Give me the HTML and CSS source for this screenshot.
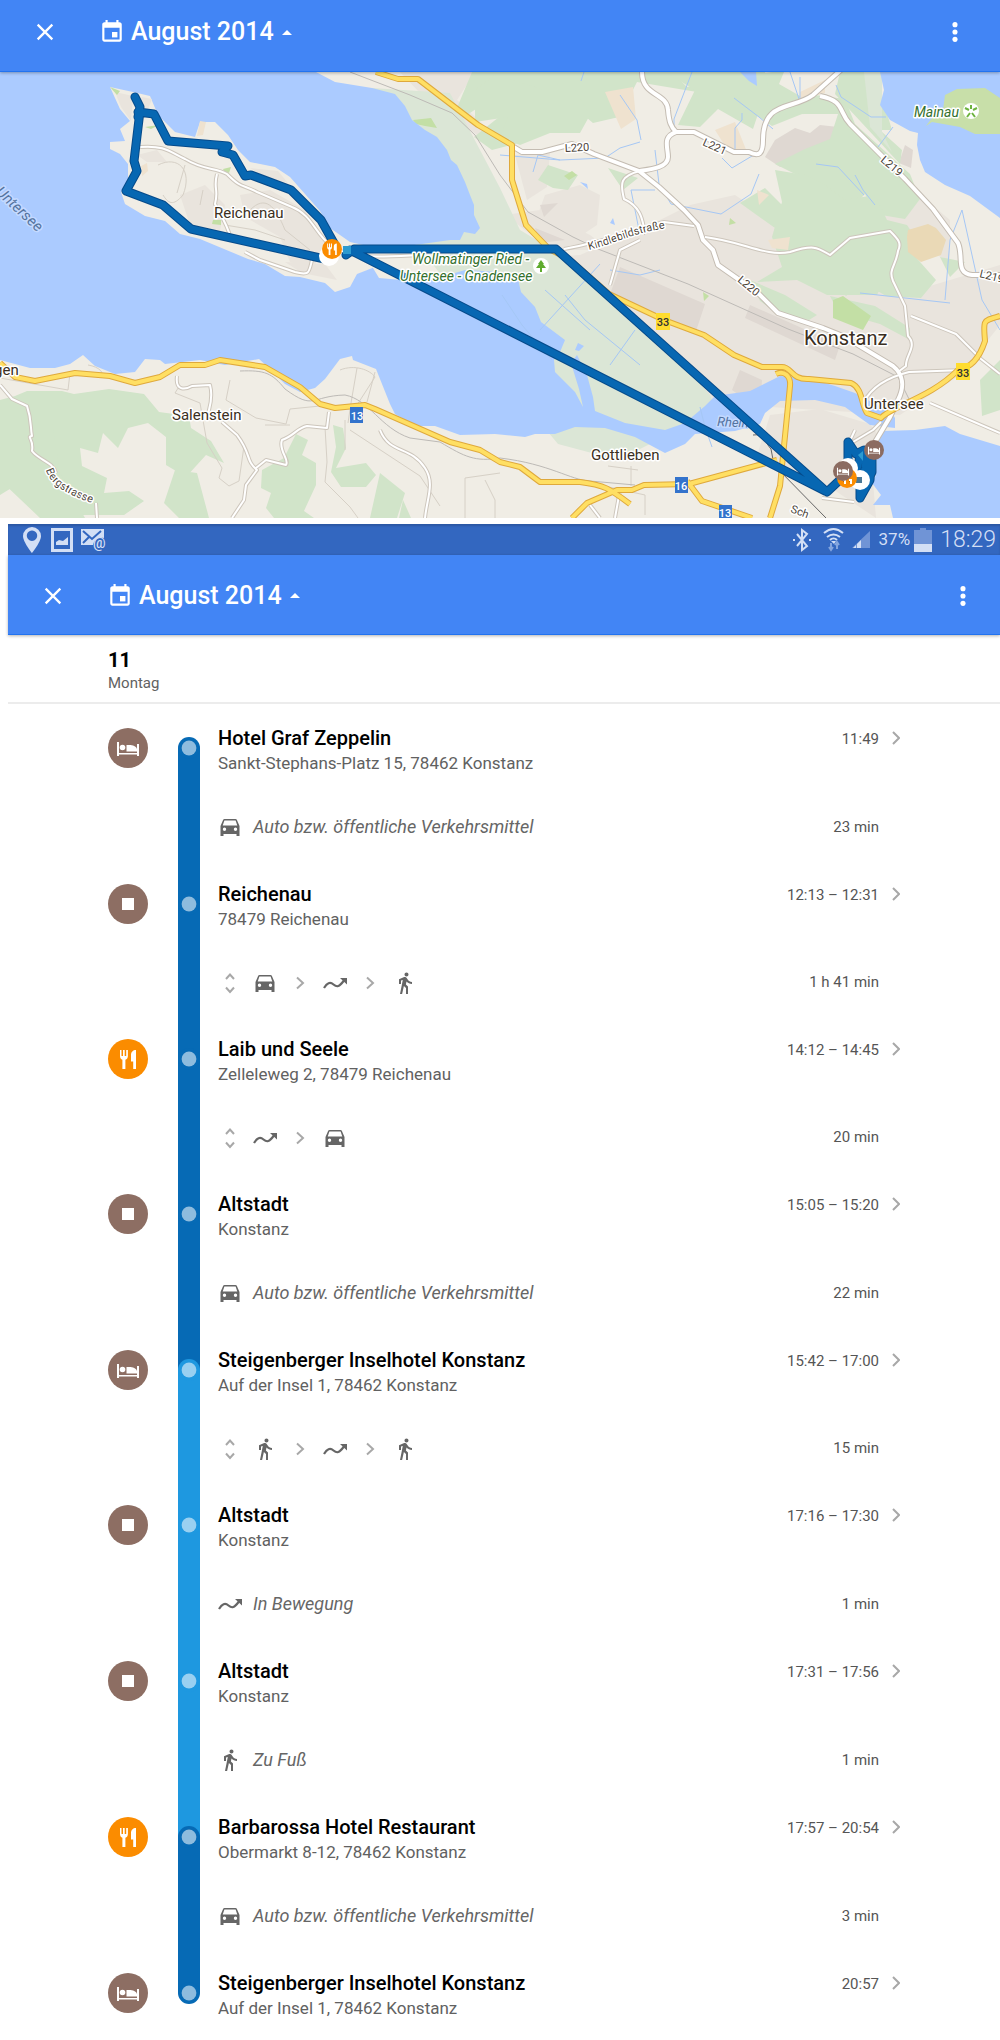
FILE: index.html
```html
<!DOCTYPE html>
<html lang="de">
  <head>
    <meta charset="UTF-8" />
    <meta name="viewport" content="width=device-width, initial-scale=1.0" />
    <title>Zeitachse - August 2014</title>
    <link rel="stylesheet" href="styles.css">
  </head>
  <body>
    <!-- icons used by both screens -->
    <svg class="sprite" width="0" height="0" aria-hidden="true">
      <symbol id="close" viewBox="0 0 24 24">
        <path d="M4 4l16 16M20 4L4 20" fill="none" stroke="currentColor" stroke-width="2.5" />
      </symbol>
      <symbol id="calendar" viewBox="0 0 24 24">
        <path d="M19 3h-1V1h-2v2H8V1H6v2H5c-1.1 0-2 .9-2 2v14c0 1.1.9 2 2 2h14c1.1 0 2-.9 2-2V5c0-1.1-.9-2-2-2zm0 16H5V8h14v11z" />
        <path d="M12 12h5v5h-5z" />
      </symbol>
      <symbol id="more" viewBox="0 0 24 24">
        <circle cx="12" cy="4" r="2.8" />
        <circle cx="12" cy="12" r="2.8" />
        <circle cx="12" cy="20" r="2.8" />
      </symbol>
      <symbol id="bed" viewBox="0 0 40 40">
        <path d="M9 14h2v11h18v-3h2v6h-2v-1.500H11V28H9z" />
        <circle cx="14.500" cy="19.500" r="2.800" />
        <path d="M18.500 17h4c4 .5 6 2 6.500 4V16h2v7.500H18.500z" />
      </symbol>
      <symbol id="square" viewBox="0 0 40 40">
        <path d="M14 14h12v12H14z" />
      </symbol>
      <symbol id="food" viewBox="0 0 40 40">
        <path d="M12 11h1.500v6H15v-6h1.700v6h1.500v-6h1.700v6c0 2-1 3.300-2.500 3.700V30h-3v-9.300C12.900 20.300 12 19 12 17z" />
        <path d="M28 11v19h-2.800v-7.500H23V16c0-3 2-5 5-5z" />
      </symbol>
      <symbol id="car" viewBox="0 0 24 24">
        <path d="M18.920 5.010C18.720 4.420 18.160 4 17.500 4h-11c-.66 0-1.210.42-1.420 1.010L2.500 11v10H5.500v-2h13v2h3V11zM6.500 16a1.700 1.700 0 1 1 0-3.400 1.700 1.700 0 0 1 0 3.400zm11 0a1.700 1.700 0 1 1 0-3.400 1.700 1.700 0 0 1 0 3.400zM4.700 10.500L6.400 5.600h11.200l1.700 4.900z" />
      </symbol>
      <symbol id="walk" viewBox="0 0 24 24">
        <path d="M13.500 5.500c1.100 0 2-.9 2-2s-.9-2-2-2-2 .9-2 2 .9 2 2 2zM9.800 8.900L7 23h2.100l1.800-8 2.100 2v6h2v-7.500l-2.100-2 .6-3C14.800 12 16.800 13 19 13v-2c-1.900 0-3.500-1-4.300-2.400l-1-1.600c-.4-.6-1-1-1.700-1-.3 0-.5.1-.8.1L6 8.300V13h2V9.600l1.800-.7" />
      </symbol>
      <symbol id="moving" viewBox="0 0 24 24">
        <path d="M1 17c3-5 6-6.500 9.500-3.500S16 16 21 9.500" fill="none" stroke="currentColor" stroke-width="2.200" />
        <path d="M17 7h7v6.500z" />
      </symbol>
      <symbol id="unfold" viewBox="0 0 24 24">
        <path d="M8 8l4-4.500L16 8M8 16.500l4 4.500 4-4.500" fill="none" stroke="#a8a8a8" stroke-width="2" />
      </symbol>
      <symbol id="next" viewBox="0 0 24 24">
        <path d="M9 6.500l6 5.500-6 5.500" fill="none" stroke="#a8a8a8" stroke-width="2" />
      </symbol>
      <symbol id="open" viewBox="0 0 8 14">
        <path d="M1 1l6 6-6 6" fill="none" stroke="#a8a8a8" stroke-width="2" />
      </symbol>
      <symbol id="dot" viewBox="0 0 22 22">
        <circle cx="11" cy="11" r="11" />
        <circle cx="11" cy="11" r="7.400" fill="#fff" opacity=".55" />
      </symbol>
    </svg>

    <section class="screen">
      <header class="app-bar app-bar-cut">
        <button class="icon-button" aria-label="Schließen"><svg><use href="#close" /></svg></button>
        <button class="month">
          <svg class="month-icon"><use href="#calendar" /></svg>
          <span>August 2014</span>
          <svg class="month-arrow" viewBox="0 0 10 5"><path d="M0 5l5-5 5 5z" /></svg>
        </button>
        <button class="icon-button icon-more" aria-label="Mehr"><svg><use href="#more" /></svg></button>
      </header>

      <svg class="map" viewBox="0 72 1000 446" preserveAspectRatio="xMidYMid slice" role="img" aria-label="Karte">
        <defs>
          <g id="roads">
            <path d="M642 72c0 25 25 20 26 38 1 12 3 17 8 22h18l40 20 15 0c10 5 14 2 14-12 0-40 30-30 50-45l30-27M820 96c25 5 18 15 30 28l55 55 28 30 25 34c6 14-3 30 14 32h28M512 146l10 6h20l30-8 22 10 45 17 20 16 25 23 14 15 5 15 10 10 5 15 40 28 20 20 45 15 20 8 50 30c10 8 12 20 5 34l-8 17-15 25M676 132c-14 5-8 15-8 25 0 10-15 12-28 14" />
          </g>
          <g id="lanes">
            <path d="M640 171c-20 5-20 12-16 28 22 10 18 30 22 35M694 226l-30-4c-20 5-60 20-100 27M705 237c40 5 60 20 85 15 25-8 28-4 40 3l20-17 40-7c8 8 12 12 8 20-2 15-10 18-5 30l12 25 3 30c10 10-3 20-2 30l-8 6M911 316l45 18 25 25 19 15M864 402c8-16 25-25 45-30l55-2M930 403l70 30M855 430l-7 15 25-15 8-8M822 498l32 4M590 505l10 13M620 490l-5 28M610 285l10-35 20-10" />
            <path d="M140 147c25-2 30 5 45 12 20 12 30 8 42 15 15 15 15 10 30 18l35 15c20 8 22 25 38 38 20 15 50 12 90 10M217 174c-4 15 2 15-2 30 5 10 12 20 15 32M245 252l15 8 35 12c15 4 14 0 17-12" />
            <path d="M0 385l12 14 15 7c5 15 3 20 5 30-6 1 2 2 0 15 8 10 20 10 24 22M96 503l1 15M177 376c-2 15 8 14 15 10l18-1c4 15-2 25-2 30M222 422l15 13c15 20 8 25 20 35l-11 15-2 15-12 18M256 468l10-8 20 5c4-5-8-15-4-25 12-4 15-12 25-14l20 2 2-16M380 430c10 25 30 15 45 38 10 15 2 30 0 50" />
          </g>
          <g id="main-roads">
            <path d="M376 72l22 7 20 0 60 46 34 20v35l14 45 23 24 20 10 40 35 55 26 40 15 30 20 28 12 20 0c10 0 9 13 27 12l42 4c12 5 10 22 16 30l14 5c10-12 50-20 78-49 12-1 20-10 26-28-2-22-2-20 15-25" />
            <path d="M776 374c8-4 15 2 14 12l-10 100-10 32M0 363l15 14 20 4 40-8 35 3 25 7 25-6 20-12h25l15-5 45 7 35 20 20 17 15 4 30-3 10 4 75 33 30 8 20 12 20 5 20 15h40c25 3 30 7 50 22M572 518l15-15 30-13 15 0 12-5 45-1 88-24M687 481l15 20 50 17" />
          </g>
          <path id="route" d="M135 97l5 10-2 10 2-6-6 50 3 10-11 20 37 14 28 24 138 31M138 112l16 2 14 27 60 5-6 6 11 3 12 21 6-1 40 15 30 30 14 25M346 255l8-6h202l271 243 16-15M350 250l475 241M848 442v18l12 18M848 442l8 12 8-4 8 5-2 25-10 18 5-30 2-15-6 0-5 20M872 460v12l-12 26 0-10" />
        </defs>

        <rect class="land" x="0" y="72" width="1000" height="446" />

        <!-- built-up areas -->
        <g class="urban">
          <path d="M400 72h75l-18 28 30 28-10 7-55-40z" />
          <path d="M515 155l35-3-3 35-20 13zM545 195l35-10 20 10-3 30-30 20-35-15zM505 215l35-5 50 25 20 15-60 0-25-20zM690 205l45-10 60 40 30-5 80 5-5 60 100-30 0 60-40 50-60 40-160-10-80-5-40-40-130-60 10-40 80-5 70-30z" />
          <path d="M770 415l50-6 50 15 15 20-13 25 4 49-60-40-60-20 10-30zM880 190l40 5 30 25 0 40-30-10-40-20zM620 268l60 30-15 25-60-35zM735 372l25 10-3 26-40-10z" />
        </g>
        <g class="block">
          <path d="M775 140l20-12 15 5 10-8 18 2-8 25-20 10-30 5-15-10zM620 267l85 37-10 30-85-40zM740 370l22 10-2 30-28-20zM750 305l90 40-5 15-90-42zM540 205l18-2-14 14zM535 228l30 12-25 3z" />
          <path d="M905 145l8 5-2 18-12-5z" />
        </g>

        <!-- woods -->
        <g class="wood">
          <path d="M472 72h200l15 15 35-8 50-7h12l-5 12 35 20-12 10-30 12-20-14-18 0 13-30-22-4-10 34-18-20-60-10-18 35-26 6-18-15-20 6-25 26-38 10-18-13 25-20-20-10-30 20z" />
          <path d="M640 72h125l6 30 27 2-20 12-20-2-5 15-35-20-18 18-22-2 17-35-25-15zM475 90l20-15 50 15 30 0 15 25-10 18-30 0-30 12-20-8 8-20-33 5zM765 115l50-20 30 4 10 25 55 50 10 25-15 20-30-5-10-20-15 15-40-5-15-10 10-15-30-15 30-15 25-10 8-25-33 0z" />
          <path d="M840 72h42v60l20 18-2 14-65-70zM775 170l30 5 20 10 20 15 30-5 12 25 20 5 20 30-25 5-15 15-10 20-50 0-30-15-40 2 25-15-10-30 10-35zM740 203l25-15 30 30 12 25-25-10zM880 90l12 40-15 0zM818 267l45-25 35-5 38 43-15 18-35-2-25-15-15 15zM940 257l25 5-15 15zM548 165l30 10-10 15-15-2-15-8zM608 168l30 10-15 12zM750 280l35 15 32 20-8 5-32-7-17-12zM830 296l45 10 35 22 0 12-30-16-42-12zM980 380l20-20v50l-18 6z" />
          <path d="M0 400l15-4 12-5 35 0 12 3 35-5 35 5 15 18 30 4 2 12 20 13 13 22-18-8-20 22-20-12 0-28-18-14-20 5-10 20-15-15-5 20-18-5 2 18 25 12-3 15 25-2 15 10-20 14H38l-7-18 15-14-10-10L0 495z" />
          <path d="M0 400l22 22 30 0 8 50 25 46H40l-40-38zM175 470l22 3 12 45h-30l-15-15zM262 470l22-12 12-24 12 6-6 15 14 8 0 22-12 26 10 7h-40l-8-10 5-15-10-5zM333 425l10 3 3 20-10 20 30-5 10 12-10 12-25 0-10-15 5-25zM380 473l25 20-8 25h-27zM403 500l8 18h-12z" />
        </g>
        <g class="reed">
          <path d="M372 88l78 5 50 95 20 42 30 18 50 35 65 60 45 52 8 20-20 3-20 12-60 30-60-16-25-30-10-30 5-20-30-18-25-25-20-25-15-25-35-45-8-35-45-75z" />
          <path d="M864 72h18v60l10 20-22-25z" />
        </g>
        <g class="sand">
          <path d="M605 92l28-5 3 32-15 10zM715 130l20-8 12 30-20-3zM800 92l25-12v13l-25 7zM757 190l12 5-10 10zM768 240l22-3-2 13-16-2z" />
        </g>
        <path class="brown" d="M908 230l20-6 8 4 10 12-5 15-20 7-13-10-1-15z" />
        <path class="park" d="M833 300l10-4 28 20-8 14-30-12zM413 120l18-2 6 10-12-2-9-2zM564 176l8-5 5 4-8 5zM730 218l6 5-7 2zM703 292l6 4-5 5z" />

        <!-- lakes -->
        <g class="water">
          <path d="M0 72h316l19 10 37 6 23 6 10 12 7 14 13 10 12 7 10 13 4 10 6 5 8 17 5 13 4 10v10l6 13-5 6-11-2-4 8-10 0-28 4-30 4-25 10 12 20 46 4 40-12 35 2 17 3 4 17 14 15 6 15 24 18-5 12-6 8 1 12 20 20 8 15-4-18-8-26 6-8 10 20 6 22 2 14 30 12 40 7 20-7 20-17 10-10 35-5 20-10 10-5 25 1 30 9 20 7 20 11 15 6 5 8 0 10-25-3-25-18-30-7-35 1-15 12-5 11-25 7-40 3-10 10-20 9-30-16-30-9-30-1-20 7h-20l-10 3-30-3-35 1-25-9h-20l-20-12-5-10-10-25-4-10-23-9-1-4-12 3-15 20-10 9-15 4-15-8-15-15-11-10-34 6-25-5-35 4-5-4-15-1-10 13-20 2-20-8-12-11-13 9-15 4H30L0 360z" />
          <path d="M882 431l33-1 30-4 15 8 40 12v72H893l-3-13-17 0 8-10-9-12 4-8 1-30zM880 72l4 18-4 15 10 15 20 11 8 2-1 12 3 15 5 12 20 13 25 11 30 22V72zM740 72h16l1 14-8-5zM610 223l3-5 2 7zM580 182l7 2 1 5zM578 343l6 3-5 5-4-1z" />
        </g>

        <!-- islands -->
        <path class="land" d="M110 87l23 5 17 4 8 19 17 17 20 5 5-15 15 0 13 13 10 15 12 12 25 5 15 10 15 17 15 17 10 17 20 14 35 8 30-3 35 0v10l-50 5-25 5-18 7-7 13-15 5-10-9-25-6-15-1-20-12-17-5-48-20-20-5-15-13-20-5-20-12-4-12 7-8v-20l-8-10-10-5v-7l15-1-5-12 10-8-10-12z" />
        <path class="urban" d="M137 155l20-5 10 12-20 0zM180 195l25-10 20 20-5 25-30-5zM240 195l30-5 35 20 20 30-10 25-25-3-10-25-35-20zM285 262l40 2 12 16-35-7zM250 168l28 3 10 12-22-6zM115 92l18 4-2 25-10-14zM142 97l10 2-5 13-10-6z" />
        <path class="sand" d="M200 121l6 1-3 13-6 1zM141 166l6-3 1 8-6 5z" />
        <path class="park" d="M110 87l10 4-3 4zM223 169l8-2-2 6-5-2zM213 220l8 0 0 5-9-1zM145 127l14-2-8 4z" />
        <path class="mainau" d="M926 126l6-8 11-8 2-15 12-6 28-1 15 10v36h-25l-15-7-28-5z" />

        <!-- brooks and lanes -->
        <path class="brook" d="M500 155l60 5M533 172l5-17 22 5 45-2 15-10 20-6M584 72l-3 9M620 95l17 25 4 20M692 72l-18 47v10M790 72l10 30 0-25M734 98l25 19 14 12M742 113v7l-7 8v22M722 158l10 10 20-12 8-5M655 190h-24l8 40M655 150l4 34 12 20 50 10 30-20 8-20M816 164l22 3 26 28M836 85l5 12 30 20 15 0M855 175l8 15 12 15M893 127l-15 20M502 295l20 30 30 35M540 330l60-66M565 295l20 25 55 45M545 290l45 40M610 365l25-35M700 407l5 20 7 20M860 293l90 10M945 300l5-60 12-30 20 90 18 30M660 270l-20 5-30-5" />
        <path class="lane" d="M158 165c20-10 35 5 25 30-10 12-15 8-20 0M185 165l-8 28M203 190l-3 15M250 210c15-15 25-5 35 20l25 20M225 225l30 5 30 10M0 378l68 12 2-17M88 365c12 2 16 8 14 12M180 385l-5 8 25 10 7 40 15 25-3 10 10 8 10-5 5-35M230 380l-4 20 30 18 30 6 4-15 30-3M265 425l25 0M340 370c15-6 30 0 35 7l-18 28M357 368l-6 35-3 20M367 402l8-30M345 420l0 30M325 427l2 35-2 20 25 25 8 11M350 430l70 46 20 30M465 518v-40l35-5M600 485l45 10 0 20M631 466v20M608 466l30 4M485 480l10 20 0 18" />

        <!-- railways -->
        <path class="rail" d="M350 72l60 23 42 18 23 22 25 40 28 37 45 25 25 12 90 35 100 45 65 25 45 23 15 30" />
        <path class="rail" d="M240 371c25-1 32 2 45 18 30 22 25 7 60 6 25 5 35 33 65 43l30 4c25 15 35 20 60 16 50 6 70 22 90 23l45 4" />
        <path class="rail rail-dark" d="M753 435c12-2 12 8 18 14l3 16 52 53" />

        <!-- roads, dark edge first -->
        <use href="#lanes" class="lane-edge" />
        <use href="#roads" class="road-edge" />
        <use href="#lanes" class="lane-top" />
        <use href="#roads" class="road-top" />
        <use href="#main-roads" class="main-edge" />
        <use href="#main-roads" class="main-top" />

        <!-- place names -->
        <g class="label">
          <text x="214" y="218">Reichenau</text>
          <text x="172" y="420">Salenstein</text>
          <text x="591" y="460">Gottlieben</text>
          <text x="864" y="409">Untersee</text>
          <text class="city" x="804" y="345">Konstanz</text>
          <text x="-6" y="375">gen</text>
          <text class="road-name" transform="translate(565 152) rotate(-3)">L220</text>
          <text class="road-name" transform="translate(702 145) rotate(24)">L221</text>
          <text class="road-name" transform="translate(880 161) rotate(40)">L219</text>
          <text class="road-name" transform="translate(737 281) rotate(40)">L220</text>
          <text class="road-name" transform="translate(979 277) rotate(14)">L219</text>
          <text class="road-name" transform="translate(790 512) rotate(20)">Sch</text>
          <path id="berg" fill="none" stroke="none" d="M46 470c4 14 18 24 52 35" />
          <path id="kindle" fill="none" stroke="none" d="M589 250c25-6 45-18 80-22" />
          <text class="road-name"><textPath href="#berg">Bergstrasse</textPath></text>
          <text class="road-name"><textPath href="#kindle">Kindlebildstraße</textPath></text>
        </g>
        <text class="lake-name" transform="translate(-5 193) rotate(43)">Untersee</text>
        <text class="lake-name river-name" transform="translate(717 426) rotate(3)">Rhein</text>

        <!-- road numbers -->
        <g class="shield">
          <rect class="shield-de" x="656" y="313" width="14" height="17" />
          <text class="shield-dark" x="663" y="326">33</text>
          <rect class="shield-de" x="956" y="363" width="14" height="17" />
          <text class="shield-dark" x="963" y="377">33</text>
          <rect class="shield-ch" x="350" y="407" width="13" height="16" />
          <text x="357" y="420">13</text>
          <rect class="shield-ch" x="675" y="477" width="13" height="16" />
          <text x="681" y="490">16</text>
          <rect class="shield-ch" x="719" y="505" width="13" height="16" />
          <text x="725" y="517">13</text>
        </g>

        <!-- recorded route -->
        <use href="#route" class="route-edge" />
        <use href="#route" class="route-top" />
        <path d="M343 246h8v8h-8zM858 455l5-4 0 10z" fill="#2c9ad0" />

        <!-- parks -->
        <g class="park-name">
          <text x="914" y="117">Mainau</text>
          <text x="412" y="264">Wollmatinger Ried -</text>
          <text x="400" y="281">Untersee - Gnadensee</text>
        </g>
        <circle cx="971" cy="111" r="8" fill="#fff" />
        <path d="M971 109v-4M973 110l4-2M972 113l3 4M970 113l-3 4M969 110l-4-2" stroke="#6db33f" stroke-width="2" />
        <circle cx="541" cy="266" r="8" fill="#fff" />
        <path d="M541 260l3 4h-1l3 4h-4v4h-2v-4h-4l3-4h-1z" fill="#5fab2e" />

        <!-- visited places -->
        <circle cx="329" cy="256" r="10" fill="#fff" />
        <circle cx="332" cy="249" r="10" fill="#fb8c00" />
        <use href="#food" x="320" y="237" width="24" height="24" fill="#fff" />
        <circle cx="848" cy="468" r="10" fill="#fff" />
        <circle cx="860" cy="480" r="10" fill="#fff" />
        <path d="M856 477h6v6h-6z" fill="#4a7896" />
        <circle cx="847" cy="478" r="10" fill="#fb8c00" />
        <path d="M843 480h2v4M849 480h2v4" stroke="#fff" stroke-width="2" />
        <circle cx="843" cy="471" r="10" fill="#8b6b61" />
        <use href="#bed" x="832" y="460" width="22" height="22" fill="#fff" />
        <circle cx="874" cy="450" r="10" fill="#8b6b61" />
        <use href="#bed" x="863" y="439" width="22" height="22" fill="#fff" />
      </svg>
    </section>

    <section class="screen screen-list">
      <div class="status-bar">
        <svg class="status-left" viewBox="0 0 84 26">
          <path fill-rule="evenodd" d="M9 0a9 9 0 0 1 9 9c0 6-9 17-9 17S0 15 0 9a9 9 0 0 1 9-9zm0 3.500a5.200 5.200 0 1 0 .01 0z" />
          <path fill-rule="evenodd" d="M28 1h22v24H28zm3 3v18h16V4z" />
          <path d="M33 18v-3l3-2 4 1 5-4v8z" />
          <path d="M58 2h23v9c-6-1-10 2-11 7H58z" />
          <path d="M60 4l9 8 9-8M60 16l6-6" fill="none" stroke="#3367c0" stroke-width="2" />
          <text x="70" y="21" font-size="14" font-weight="500">@</text>
        </svg>
        <svg class="status-right" viewBox="0 0 78 26">
          <path d="M4 7l10 12-5 4V3l5 4L4 19M0 13h2M16 13h2" fill="none" stroke="currentColor" stroke-width="2" />
          <path d="M31 6c6-5 13-5 19 0M34 10c4-3 9-3 13 0M37 13c2-2 5-2 7 0" fill="none" stroke="currentColor" stroke-width="2" />
          <path d="M38 14h5l-2 3z" />
          <path d="M38 16v6M44 22v-6M36 20l2 3 2-3M42 18l2-3 2 3" fill="none" stroke="#84a5de" stroke-width="2" />
          <path d="M77 4v17H59z" fill="#7094d6" />
          <path d="M60 21l3-3v3zM64 17l4-4v8h-4z" />
        </svg>
        <span class="battery-text">37%</span>
        <svg class="battery" viewBox="0 0 18 24">
          <path d="M6 0h6v2h6v14H0V2h6z" fill="#7094d6" />
          <path d="M0 16h18v8H0z" />
        </svg>
        <span class="clock">18:29</span>
      </div>

      <header class="app-bar">
        <button class="icon-button" aria-label="Schließen"><svg><use href="#close" /></svg></button>
        <button class="month">
          <svg class="month-icon"><use href="#calendar" /></svg>
          <span>August 2014</span>
          <svg class="month-arrow" viewBox="0 0 10 5"><path d="M0 5l5-5 5 5z" /></svg>
        </button>
        <button class="icon-button icon-more" aria-label="Mehr"><svg><use href="#more" /></svg></button>
      </header>

      <div class="day">
        <h1>11</h1>
        <p>Montag</p>
      </div>

      <ol class="timeline">
        <li class="row stop">
          <svg class="marker"><use href="#bed" /></svg>
          <span class="track track-start"><svg class="track-dot"><use href="#dot" /></svg></span>
          <div class="place"><h2>Hotel Graf Zeppelin</h2><p>Sankt-Stephans-Platz 15, 78462 Konstanz</p></div>
          <span class="time">11:49</span>
          <button class="open" aria-label="Details"><svg><use href="#open" /></svg></button>
        </li>
        <li class="row leg">
          <span class="track"></span>
          <div class="moves"><svg><use href="#car" /></svg><em>Auto bzw. öffentliche Verkehrsmittel</em></div>
          <span class="time">23 min</span>
        </li>
        <li class="row stop">
          <svg class="marker"><use href="#square" /></svg>
          <span class="track"><svg class="track-dot"><use href="#dot" /></svg></span>
          <div class="place"><h2>Reichenau</h2><p>78479 Reichenau</p></div>
          <span class="time">12:13 – 12:31</span>
          <button class="open" aria-label="Details"><svg><use href="#open" /></svg></button>
        </li>
        <li class="row leg leg-folded">
          <span class="track"></span>
          <div class="moves">
            <button aria-label="Ausklappen"><svg><use href="#unfold" /></svg></button>
            <svg><use href="#car" /></svg>
            <svg><use href="#next" /></svg>
            <svg><use href="#moving" /></svg>
            <svg><use href="#next" /></svg>
            <svg><use href="#walk" /></svg>
          </div>
          <span class="time">1 h 41 min</span>
        </li>
        <li class="row stop">
          <svg class="marker marker-food"><use href="#food" /></svg>
          <span class="track"><svg class="track-dot"><use href="#dot" /></svg></span>
          <div class="place"><h2>Laib und Seele</h2><p>Zelleleweg 2, 78479 Reichenau</p></div>
          <span class="time">14:12 – 14:45</span>
          <button class="open" aria-label="Details"><svg><use href="#open" /></svg></button>
        </li>
        <li class="row leg leg-folded">
          <span class="track"></span>
          <div class="moves">
            <button aria-label="Ausklappen"><svg><use href="#unfold" /></svg></button>
            <svg><use href="#moving" /></svg>
            <svg><use href="#next" /></svg>
            <svg><use href="#car" /></svg>
          </div>
          <span class="time">20 min</span>
        </li>
        <li class="row stop">
          <svg class="marker"><use href="#square" /></svg>
          <span class="track"><svg class="track-dot"><use href="#dot" /></svg></span>
          <div class="place"><h2>Altstadt</h2><p>Konstanz</p></div>
          <span class="time">15:05 – 15:20</span>
          <button class="open" aria-label="Details"><svg><use href="#open" /></svg></button>
        </li>
        <li class="row leg">
          <span class="track"></span>
          <div class="moves"><svg><use href="#car" /></svg><em>Auto bzw. öffentliche Verkehrsmittel</em></div>
          <span class="time">22 min</span>
        </li>
        <li class="row stop">
          <svg class="marker"><use href="#bed" /></svg>
          <span class="track track-to-light"><svg class="track-dot"><use href="#dot" /></svg></span>
          <div class="place"><h2>Steigenberger Inselhotel Konstanz</h2><p>Auf der Insel 1, 78462 Konstanz</p></div>
          <span class="time">15:42 – 17:00</span>
          <button class="open" aria-label="Details"><svg><use href="#open" /></svg></button>
        </li>
        <li class="row leg leg-folded">
          <span class="track track-light"></span>
          <div class="moves">
            <button aria-label="Ausklappen"><svg><use href="#unfold" /></svg></button>
            <svg><use href="#walk" /></svg>
            <svg><use href="#next" /></svg>
            <svg><use href="#moving" /></svg>
            <svg><use href="#next" /></svg>
            <svg><use href="#walk" /></svg>
          </div>
          <span class="time">15 min</span>
        </li>
        <li class="row stop">
          <svg class="marker"><use href="#square" /></svg>
          <span class="track track-light"><svg class="track-dot"><use href="#dot" /></svg></span>
          <div class="place"><h2>Altstadt</h2><p>Konstanz</p></div>
          <span class="time">17:16 – 17:30</span>
          <button class="open" aria-label="Details"><svg><use href="#open" /></svg></button>
        </li>
        <li class="row leg">
          <span class="track track-light"></span>
          <div class="moves"><svg><use href="#moving" /></svg><em>In Bewegung</em></div>
          <span class="time">1 min</span>
        </li>
        <li class="row stop">
          <svg class="marker"><use href="#square" /></svg>
          <span class="track track-light"><svg class="track-dot"><use href="#dot" /></svg></span>
          <div class="place"><h2>Altstadt</h2><p>Konstanz</p></div>
          <span class="time">17:31 – 17:56</span>
          <button class="open" aria-label="Details"><svg><use href="#open" /></svg></button>
        </li>
        <li class="row leg">
          <span class="track track-light"></span>
          <div class="moves"><svg><use href="#walk" /></svg><em>Zu Fuß</em></div>
          <span class="time">1 min</span>
        </li>
        <li class="row stop">
          <svg class="marker marker-food"><use href="#food" /></svg>
          <span class="track track-to-dark"><svg class="track-dot"><use href="#dot" /></svg></span>
          <div class="place"><h2>Barbarossa Hotel Restaurant</h2><p>Obermarkt 8-12, 78462 Konstanz</p></div>
          <span class="time">17:57 – 20:54</span>
          <button class="open" aria-label="Details"><svg><use href="#open" /></svg></button>
        </li>
        <li class="row leg">
          <span class="track"></span>
          <div class="moves"><svg><use href="#car" /></svg><em>Auto bzw. öffentliche Verkehrsmittel</em></div>
          <span class="time">3 min</span>
        </li>
        <li class="row stop">
          <svg class="marker"><use href="#bed" /></svg>
          <span class="track track-end"><svg class="track-dot"><use href="#dot" /></svg></span>
          <div class="place"><h2>Steigenberger Inselhotel Konstanz</h2><p>Auf der Insel 1, 78462 Konstanz</p></div>
          <span class="time">20:57</span>
          <button class="open" aria-label="Details"><svg><use href="#open" /></svg></button>
        </li>
      </ol>
    </section>
  </body>
</html>
```
FILE: styles.css
```css
* {
  box-sizing: border-box;
}
body {
  font-family: Roboto, "Liberation Sans", sans-serif;
  background-color: #fff;
  color: #000;
  margin: 0;
}
h1,
h2,
p,
ol {
  margin: 0;
  padding: 0;
}
button {
  font: inherit;
  color: inherit;
  background: none;
  border: 0;
  padding: 0;
  cursor: pointer;
}
svg {
  display: block;
  fill: currentColor;
}
.sprite {
  position: absolute;
}
.screen-list {
  margin: 6px 0 0 8px;
}

/* app bar */
.app-bar {
  height: 80px;
  display: flex;
  align-items: center;
  padding: 2px 26px 0 34px;
  color: #fff;
  background-color: #4285f5;
  border-bottom: 1px solid #2273f0;
  box-shadow: 0 1px 3px rgba(0, 0, 0, 0.3);
  position: relative;
}
.app-bar-cut {
  height: 72px;
  padding: 0 34px 7px;
}
.icon-button svg {
  width: 22px;
  height: 22px;
}
.month {
  display: flex;
  align-items: center;
  margin-left: 43px;
  font-size: 25px;
  font-weight: 500;
  line-height: 32px;
}
.month-icon {
  width: 26px;
  height: 26px;
  margin-right: 6px;
}
.month-arrow {
  width: 10px;
  height: 5px;
  margin-left: 8px;
}
.icon-more {
  margin-left: auto;
}

/* map */
.map {
  width: 100%;
  height: 446px;
}
.land { fill: #f0ede5; }
.urban { fill: #e9e4dd; }
.block { fill: #dfd8d2; }
.wood { fill: #d1e4c9; }
.reed { fill: #dbe6d6; }
.sand { fill: #efe2cf; }
.brown { fill: #ead9b6; }
.park { fill: #c3dfa5; }
.mainau { fill: #c8dfa9; }
.water { fill: #abcbff; }
.brook,
.lane,
.rail,
.lane-edge,
.lane-top,
.road-edge,
.road-top,
.main-edge,
.main-top,
.route-edge,
.route-top {
  fill: none;
  stroke-linejoin: round;
}
.brook { stroke: #a5c7f5; }
.lane { stroke: #d6d0c6; }
.rail { stroke: #bdbab6; }
.rail-dark { stroke: #666; }
.lane-edge {
  stroke: #cdc6bc;
  stroke-width: 4px;
}
.lane-top {
  stroke: #fff;
  stroke-width: 2px;
}
.road-edge {
  stroke: #c4bcb2;
  stroke-width: 6px;
}
.road-top {
  stroke: #fff;
  stroke-width: 4px;
}
.main-edge {
  stroke: #dfa93c;
  stroke-width: 6px;
}
.main-top {
  stroke: #ffdf63;
  stroke-width: 4px;
}
.route-edge {
  stroke: #064a8a;
  stroke-width: 9px;
  stroke-linecap: round;
}
.route-top {
  stroke: #0767b2;
  stroke-width: 7px;
  stroke-linecap: round;
}
.label text,
.park-name text,
.lake-name {
  paint-order: stroke;
  stroke: #fff;
  stroke-width: 3px;
  stroke-linejoin: round;
}
.label {
  font-size: 15px;
  fill: #3a2f22;
}
.label .city {
  font-size: 20px;
}
.label .road-name {
  font-size: 11px;
  fill: #4c4439;
}
.lake-name {
  font-size: 15px;
  font-style: italic;
  fill: #54749f;
  stroke: #c4daff;
}
.river-name {
  font-size: 13px;
}
.park-name {
  font-size: 14px;
  font-style: italic;
  fill: #33702d;
}
.shield {
  font-size: 11px;
  font-weight: 500;
  fill: #fff;
  text-anchor: middle;
}
.shield-de { fill: #ffdc2e; }
.shield-ch { fill: #3373cc; }
.shield-dark { fill: #333; }

/* status bar */
.status-bar {
  height: 31px;
  display: flex;
  align-items: center;
  padding: 0 4px 0 15px;
  color: #d3dff5;
  background-color: #3367c0;
  box-shadow: inset 0 2px 2px rgba(0, 0, 0, 0.15);
}
.status-left {
  width: 84px;
  height: 26px;
}
.status-right {
  width: 78px;
  height: 26px;
  margin-left: auto;
}
.battery-text {
  margin-left: 8px;
  font-size: 17px;
  line-height: 31px;
}
.battery {
  width: 18px;
  height: 24px;
  margin: 0 8px 0 4px;
}
.clock {
  font-size: 23px;
  font-weight: 300;
  line-height: 31px;
}

/* day */
.day {
  padding: 13px 100px 8px;
  border-bottom: 2px solid #ececec;
}
.day h1 {
  font-size: 20px;
  font-weight: 700;
  line-height: 25px;
}
.day p {
  font-size: 15px;
  line-height: 21px;
  color: #616161;
}

/* timeline */
.timeline {
  list-style: none;
  padding: 5px 100px 8px;
}
.row {
  display: grid;
  grid-template-columns: 40px 22px 1fr auto 8px;
  height: 78px;
}
.leg-folded {
  height: 77px;
}
.marker {
  align-self: center;
  width: 40px;
  height: 40px;
  border-radius: 50%;
  color: #fff;
  background-color: #8d6e63;
}
.marker-food {
  background-color: #fb8c00;
}
.track {
  grid-column: 2;
  display: flex;
  align-items: center;
  margin: 0 -30px 0 30px;
  color: #066ab5;
  background-color: #066ab5;
}
.track-dot {
  width: 22px;
  height: 22px;
}
.track-light {
  color: #1e98e0;
  background-color: #1e98e0;
}
.track-start {
  background: linear-gradient(transparent 50%, #066ab5 50%);
}
.track-end {
  background: linear-gradient(#066ab5 50%, transparent 50%);
}
.track-to-light {
  color: #1e98e0;
  background: linear-gradient(#066ab5 50%, #1e98e0 50%);
}
.track-to-dark {
  background: linear-gradient(#1e98e0 50%, #066ab5 50%);
}
.place {
  padding: 16px 0 0 48px;
}
.place h2 {
  font-size: 20px;
  font-weight: 500;
  line-height: 26px;
}
.place p {
  font-size: 17px;
  line-height: 25px;
  color: #616161;
}
.time {
  font-size: 15px;
  line-height: 25px;
  padding-top: 18px;
  margin-right: 13px;
  color: #555;
}
.open {
  align-self: start;
  padding-top: 22px;
}
.open svg {
  width: 8px;
  height: 14px;
}
.leg {
  align-items: center;
}
.leg .track {
  align-self: stretch;
}
.leg .time {
  padding-top: 2px;
}
.moves {
  display: flex;
  align-items: center;
  gap: 11px;
  padding: 2px 0 0 48px;
  color: #666;
}
.moves svg {
  width: 24px;
  height: 24px;
}
.moves em {
  font-size: 18px;
  line-height: 24px;
}
```
